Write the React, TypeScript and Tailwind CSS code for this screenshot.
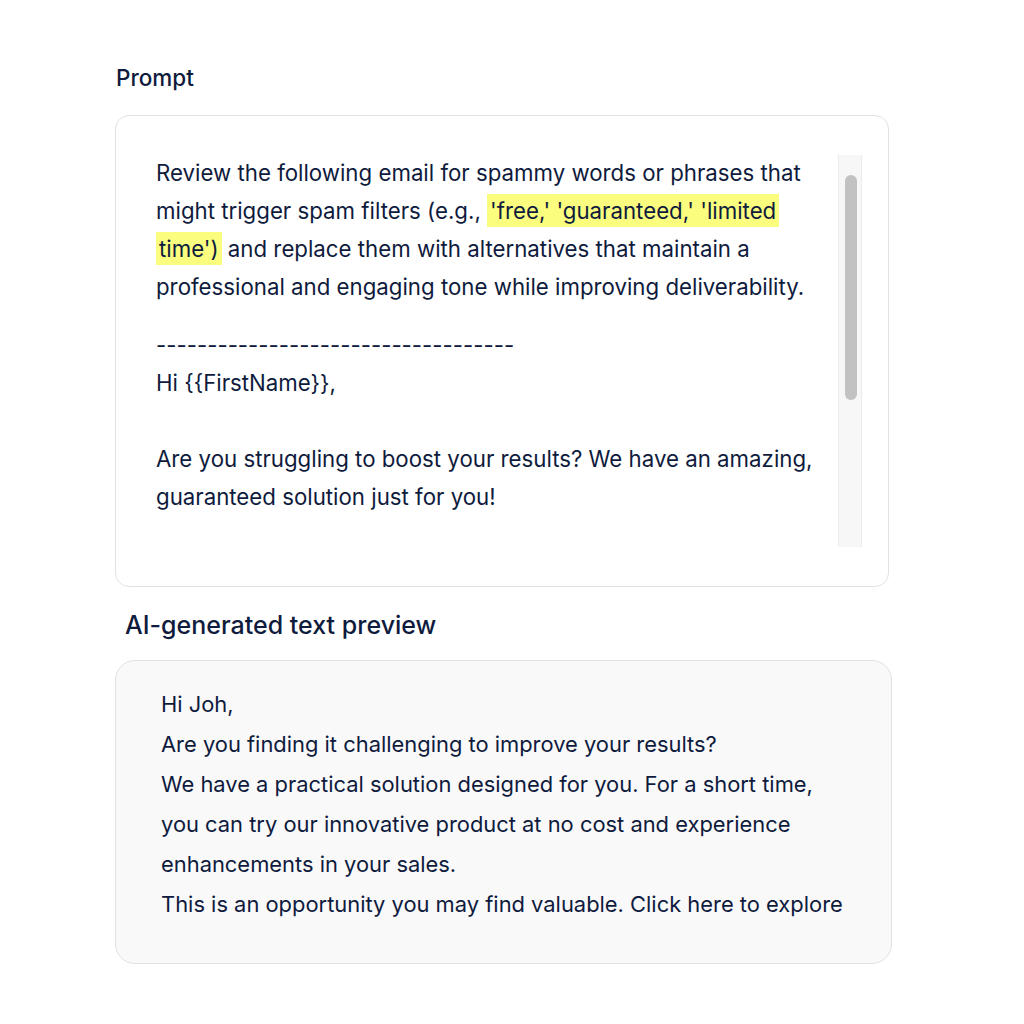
import React from "react";

const ink = "text-[#0f1b3d]";

const Highlight = ({ children }: { children: React.ReactNode }) => (
  <span className="bg-[#fafd7e] px-[3px] py-[3px] box-decoration-clone">{children}</span>
);

const PromptCard = () => {
  return (
    <div className="h-[472px] w-[774px] rounded-[14px] border border-[#e1e2e8] bg-white pt-[38px] pb-[40px] pl-[40px] pr-[26px]">
      <div className="flex h-full">
        {/* Prompt body */}
        <div className={`flex-1 overflow-hidden pr-[12px] text-[22.25px] leading-[38px] ${ink}`}>
          <p>
            Review the following email for spammy words or phrases that might trigger spam filters (e.g.,{" "}
            <Highlight>'free,' 'guaranteed,' 'limited time')</Highlight> and replace them with alternatives that
            maintain a professional and engaging tone while improving deliverability.
          </p>
          <div className="mt-[20px] whitespace-pre-wrap">
            {"-----------------------------------\nHi {{FirstName}},\n\nAre you struggling to boost your results? We have an amazing, guaranteed solution just for you!\n\nFor a limited time, you can try our revolutionary product for free and see instant improvements in your sales."}
          </div>
        </div>

        {/* Scrollbar */}
        <div className="mt-px h-full w-[24px] shrink-0 border-x border-[#ececec] bg-[#f7f7f7]">
          <div className="ml-[6px] mt-[20px] h-[225px] w-[12px] rounded-full bg-[#c2c2c2]" />
        </div>
      </div>
    </div>
  );
};

const previewLines = [
  "Hi Joh,",
  "Are you finding it challenging to improve your results?",
  "We have a practical solution designed for you. For a short time,",
  "you can try our innovative product at no cost and experience",
  "enhancements in your sales.",
  "This is an opportunity you may find valuable. Click here to explore",
];

const PreviewCard = () => {
  return (
    <div className="h-[304px] w-[777px] rounded-[20px] border border-[#e1e2e8] bg-[#f9f9fa] pt-[23px] pl-[45px]">
      <div className={`text-[21.9px] leading-[40px] ${ink}`}>
        {previewLines.map((line) => (
          <div key={line} className="whitespace-nowrap">
            {line}
          </div>
        ))}
      </div>
    </div>
  );
};

export default function App() {
  return (
    <div className="min-h-[1024px] w-[1024px] bg-white pl-[115px] pt-[63px] font-['Inter',sans-serif] antialiased">
      <h2 className={`ml-px text-[22.5px] font-medium leading-[30px] ${ink}`}>Prompt</h2>
      <div className="mt-[22px]">
        <PromptCard />
      </div>

      <h2 className={`ml-[10px] mt-[22px] text-[25px] font-medium leading-[32px] ${ink}`}>AI-generated text preview</h2>
      <div className="mt-[19px]">
        <PreviewCard />
      </div>
    </div>
  );
}
